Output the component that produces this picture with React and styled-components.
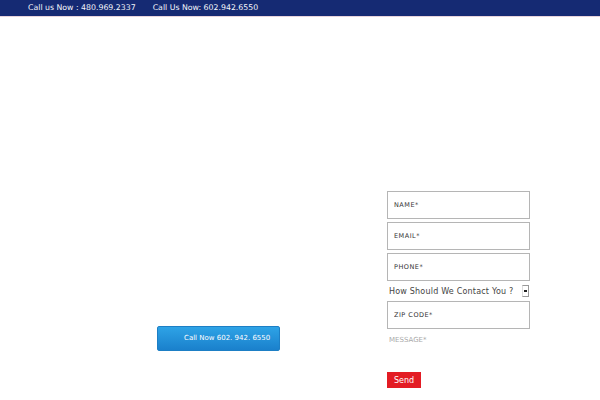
import React from "react";
import styled, { createGlobalStyle } from "styled-components";

const Global = createGlobalStyle`
  body {
    margin: 0;
    background: #fff;
    font-family: "DejaVu Sans", Verdana, sans-serif;
  }
`;

const App = () => {
  return (
    <Page>
      <Global />
      <TopBar>
        <Phone>Call us Now : 480.969.2337</Phone>
        <Phone>Call Us Now: 602.942.6550</Phone>
      </TopBar>
      <Main>
        <Left>
          <CallButton>Call Now 602. 942. 6550</CallButton>
        </Left>
        <Form>
          <Field placeholder="NAME*" />
          <Field placeholder="EMAIL*" />
          <Field placeholder="PHONE*" />
          <SelectRow>
            <span>How Should We Contact You ?</span>
            <Arrow />
          </SelectRow>
          <Field placeholder="ZIP CODE*" />
          <Message placeholder="MESSAGE*" />
          <Send>Send</Send>
        </Form>
      </Main>
    </Page>
  );
};

export default App;

const Page = styled.div`
  width: 600px;
  height: 400px;
  overflow: hidden;
`;

const TopBar = styled.div`
  display: flex;
  align-items: center;
  gap: 17px;
  height: 16px;
  padding: 0 0 0 28px;
  background-color: #152a73;
  border-bottom: 1px solid #e8d4dc;
`;

const Phone = styled.span`
  color: #f4f6fb;
  font-size: 7.8px;
  line-height: 16px;
`;

const Main = styled.div`
  display: flex;
  padding-top: 174px;
`;

const Left = styled.div`
  width: 387px;
  padding: 134px 0 0 157px;
  box-sizing: border-box;
`;

const CallButton = styled.button`
  width: 123px;
  height: 25px;
  padding: 0 0 0 26px;
  text-align: left;
  white-space: nowrap;
  border: 1px solid #1d7fc5;
  border-radius: 2px;
  background: linear-gradient(#2ea3e6, #1a80cc);
  color: #fff;
  font-family: "DejaVu Sans", Verdana, sans-serif;
  font-size: 7px;
`;

const Form = styled.div`
  display: flex;
  flex-direction: column;
  width: 143px;
`;

const Field = styled.input`
  box-sizing: border-box;
  height: 28px;
  width: 143px;
  margin-bottom: 3px;
  padding: 0 0 0 6px;
  border: 1px solid #b5b5b5;
  font-family: "DejaVu Sans", Verdana, sans-serif;
  font-size: 6.5px;
  letter-spacing: 0.5px;
  &::placeholder {
    color: #333;
  }
`;

const SelectRow = styled.div`
  display: flex;
  align-items: center;
  justify-content: space-between;
  height: 14px;
  margin: 0 0 3px 2px;
  font-size: 8px;
  color: #444;
  letter-spacing: 0.2px;
`;

const Arrow = styled.div`
  width: 5px;
  height: 10px;
  margin-right: 1px;
  border: 1px solid #999;
  border-left-color: #ddd;
  background: linear-gradient(#fff 40%, #222 40%, #222 60%, #fff 60%);
  background-size: 3px 100%;
  background-repeat: no-repeat;
  background-position: center;
`;

const Message = styled.textarea`
  box-sizing: border-box;
  height: 38px;
  width: 143px;
  border: none;
  resize: none;
  padding: 4px 0 0 2px;
  margin: 0 0 2px;
  font-family: "DejaVu Sans", Verdana, sans-serif;
  font-size: 7px;
  &::placeholder {
    color: #aaa;
  }
`;

const Send = styled.button`
  align-self: flex-start;
  width: 34px;
  height: 16px;
  padding: 0;
  border: none;
  background: #e31c24;
  color: #fff;
  font-family: "DejaVu Sans", Verdana, sans-serif;
  font-size: 8px;
`;
